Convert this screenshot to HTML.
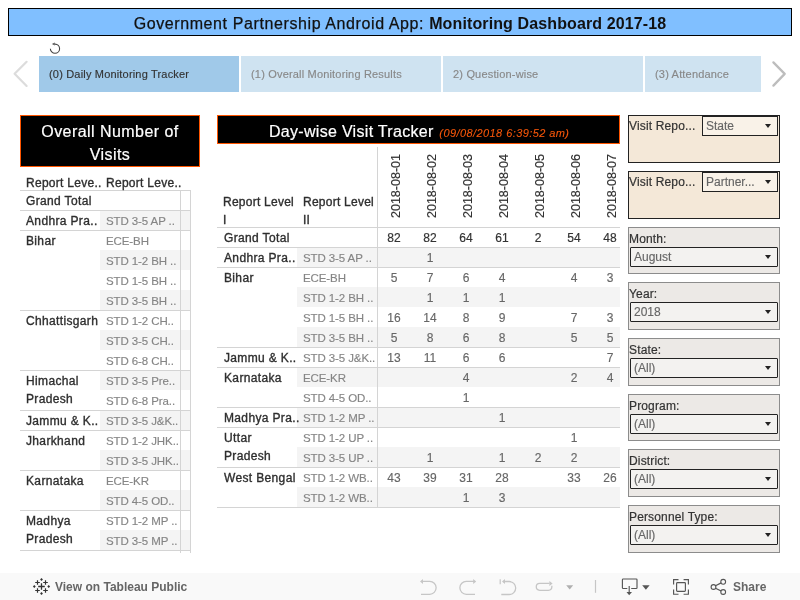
<!DOCTYPE html><html><head><meta charset="utf-8"><style>
*{margin:0;padding:0;box-sizing:border-box}
html,body{width:800px;height:600px;overflow:hidden;background:#fff;font-family:"Liberation Sans", sans-serif}
.a,.t,.hl,.vl,.band,.pbox,.plab,.dd,.ddt,.tri{will-change:transform}
.a{position:absolute}
.t{position:absolute;white-space:nowrap;line-height:20px;height:20px;padding-top:1px}
.l1{color:#2e2e2e;font-size:12px;letter-spacing:0.35px;-webkit-text-stroke:0.35px #2e2e2e}
.l2{color:#858585;font-size:11.5px;letter-spacing:-0.1px;overflow:hidden;width:74px;-webkit-text-stroke:0.15px #858585}
.num{color:#666;font-size:12px;text-align:center;width:36px;-webkit-text-stroke:0.15px #666}
.gt{color:#333;-webkit-text-stroke:0.2px #333}
.hl{position:absolute;height:1px;background:#d4d4d4}
.vl{position:absolute;width:1px;background:#d4d4d4}
.band{position:absolute;height:20px;background:#f4f4f4}
.pbox{position:absolute;left:628px;width:152px;border:1px solid #8c8c8c;background:#ece9e6}
.plab{position:absolute;left:0px;top:3.5px;font-size:12px;letter-spacing:0.15px;color:#333;white-space:nowrap;line-height:14px;-webkit-text-stroke:0.2px #333}
.dd{position:absolute;left:1px;top:19px;width:148px;height:20px;border:1px solid #222;background:#f3f2f0;border-radius:1px}
.ddt{position:absolute;left:3px;top:0;line-height:18px;font-size:12px;color:#666;white-space:nowrap;-webkit-text-stroke:0.15px #666}
.tri{position:absolute;width:0;height:0;border-left:3px solid transparent;border-right:3px solid transparent;border-top:4px solid #222}
</style></head><body>
<div class="band" style="left:100px;top:210px;width:90px"></div>
<div class="band" style="left:100px;top:250px;width:90px"></div>
<div class="band" style="left:100px;top:290px;width:90px"></div>
<div class="band" style="left:100px;top:330px;width:90px"></div>
<div class="band" style="left:100px;top:370px;width:90px"></div>
<div class="band" style="left:100px;top:410px;width:90px"></div>
<div class="band" style="left:100px;top:450px;width:90px"></div>
<div class="band" style="left:100px;top:490px;width:90px"></div>
<div class="band" style="left:100px;top:530px;width:90px"></div>
<div class="band" style="left:297px;top:247px;width:323px"></div>
<div class="band" style="left:297px;top:287px;width:323px"></div>
<div class="band" style="left:297px;top:327px;width:323px"></div>
<div class="band" style="left:297px;top:367px;width:323px"></div>
<div class="band" style="left:297px;top:407px;width:323px"></div>
<div class="band" style="left:297px;top:447px;width:323px"></div>
<div class="band" style="left:297px;top:487px;width:323px"></div>
<div class="hl" style="left:20px;top:190px;width:171px"></div>
<div class="hl" style="left:20px;top:210px;width:171px"></div>
<div class="hl" style="left:20px;top:230px;width:171px"></div>
<div class="hl" style="left:20px;top:310px;width:171px"></div>
<div class="hl" style="left:20px;top:370px;width:171px"></div>
<div class="hl" style="left:20px;top:410px;width:171px"></div>
<div class="hl" style="left:20px;top:430px;width:171px"></div>
<div class="hl" style="left:20px;top:470px;width:171px"></div>
<div class="hl" style="left:20px;top:510px;width:171px"></div>
<div class="hl" style="left:20px;top:550px;width:171px"></div>
<div class="vl" style="left:180px;top:190px;height:363px"></div>
<div class="vl" style="left:190px;top:190px;height:363px"></div>
<div class="hl" style="left:217px;top:227px;width:403px"></div>
<div class="hl" style="left:217px;top:247px;width:403px"></div>
<div class="hl" style="left:217px;top:267px;width:403px"></div>
<div class="hl" style="left:217px;top:347px;width:403px"></div>
<div class="hl" style="left:217px;top:367px;width:403px"></div>
<div class="hl" style="left:217px;top:407px;width:403px"></div>
<div class="hl" style="left:217px;top:427px;width:403px"></div>
<div class="hl" style="left:217px;top:467px;width:403px"></div>
<div class="hl" style="left:217px;top:507px;width:403px"></div>
<div class="vl" style="left:377px;top:147px;height:361px"></div>
<div class="a" style="left:8px;top:8px;width:784px;height:28px;border:1px solid #000;background:#80bfff;"></div>
<div class="a" style="left:8px;top:8px;width:784px;height:28px;line-height:28px;text-align:center;font-size:16px;letter-spacing:0.6px;color:#111;white-space:nowrap;padding-top:2px;-webkit-text-stroke:0.25px #111">Government Partnership Android App: <b style="letter-spacing:0.12px;-webkit-text-stroke:0">Monitoring Dashboard 2017-18</b></div>
<svg class="a" style="left:45px;top:38px" width="20" height="20" viewBox="0 0 20 20"><path d="M10 6.1 A4.6 4.6 0 1 1 5.4 10.7" fill="none" stroke="#444" stroke-width="1.1"/><path d="M6.9 6.1 L9.8 4.6 L9.8 7.6 Z" fill="#555"/></svg>
<div class="a" style="left:39px;top:56px;width:200px;height:36px;background:#a0c9e9;overflow:hidden"><div class="a" style="left:10px;top:0;line-height:36px;font-size:11px;letter-spacing:0.18px;color:#333;white-space:nowrap;-webkit-text-stroke:0.15px #333">(0) Daily Monitoring Tracker</div></div>
<div class="a" style="left:241px;top:56px;width:200px;height:36px;background:#cfe3f1;overflow:hidden"><div class="a" style="left:10px;top:0;line-height:36px;font-size:11px;letter-spacing:0.18px;color:#888;white-space:nowrap;-webkit-text-stroke:0.15px #888">(1) Overall Monitoring Results</div></div>
<div class="a" style="left:443px;top:56px;width:200px;height:36px;background:#cfe3f1;overflow:hidden"><div class="a" style="left:10px;top:0;line-height:36px;font-size:11px;letter-spacing:0.18px;color:#888;white-space:nowrap;-webkit-text-stroke:0.15px #888">2) Question-wise</div></div>
<div class="a" style="left:645px;top:56px;width:116px;height:36px;background:#cfe3f1;overflow:hidden"><div class="a" style="left:10px;top:0;line-height:36px;font-size:11px;letter-spacing:0.18px;color:#888;white-space:nowrap;-webkit-text-stroke:0.15px #888">(3) Attendance</div></div>
<svg class="a" style="left:10px;top:58px" width="24" height="32"><path d="M16.6 3.8 L4.6 15.8 L16.6 27.9" fill="none" stroke="#dcdcdc" stroke-width="2.2" stroke-linecap="round" stroke-linejoin="round"/></svg>
<svg class="a" style="left:766px;top:58px" width="24" height="32"><path d="M7.4 4.4 L18.7 15.9 L7.4 27.6" fill="none" stroke="#bdbdbd" stroke-width="2.3" stroke-linecap="round" stroke-linejoin="round"/></svg>
<div class="a" style="left:20px;top:115px;width:180px;height:52px;background:#000;border:1px solid #ff5500"></div>
<div class="a" style="left:20px;top:120.5px;width:180px;text-align:center;color:#fff;font-size:16px;letter-spacing:0.45px;line-height:22.75px;-webkit-text-stroke:0.2px #fff">Overall Number of<br>Visits</div>
<div class="t l1" style="left:26px;top:172px;letter-spacing:0.28px">Report Leve..</div>
<div class="t l1" style="left:106px;top:172px;letter-spacing:0.28px">Report Leve..</div>
<div class="t l1" style="left:26px;top:190px">Grand Total</div>
<div class="t l2" style="left:106px;top:210px">STD 3-5 AP ..</div>
<div class="t l1" style="left:26px;top:210px">Andhra Pra..</div>
<div class="t l2" style="left:106px;top:230px">ECE-BH</div>
<div class="t l2" style="left:106px;top:250px">STD 1-2 BH ..</div>
<div class="t l2" style="left:106px;top:270px">STD 1-5 BH ..</div>
<div class="t l2" style="left:106px;top:290px">STD 3-5 BH ..</div>
<div class="t l1" style="left:26px;top:230px">Bihar</div>
<div class="t l2" style="left:106px;top:310px">STD 1-2 CH..</div>
<div class="t l2" style="left:106px;top:330px">STD 3-5 CH..</div>
<div class="t l2" style="left:106px;top:350px">STD 6-8 CH..</div>
<div class="t l1" style="left:26px;top:310px">Chhattisgarh</div>
<div class="t l2" style="left:106px;top:370px">STD 3-5 Pre..</div>
<div class="t l2" style="left:106px;top:390px">STD 6-8 Pra..</div>
<div class="a l1" style="left:26px;top:372px;line-height:18px;white-space:nowrap">Himachal<br>Pradesh</div>
<div class="t l2" style="left:106px;top:410px">STD 3-5 J&amp;K..</div>
<div class="t l1" style="left:26px;top:410px">Jammu &amp; K..</div>
<div class="t l2" style="left:106px;top:430px">STD 1-2 JHK..</div>
<div class="t l2" style="left:106px;top:450px">STD 3-5 JHK..</div>
<div class="t l1" style="left:26px;top:430px">Jharkhand</div>
<div class="t l2" style="left:106px;top:470px">ECE-KR</div>
<div class="t l2" style="left:106px;top:490px">STD 4-5 OD..</div>
<div class="t l1" style="left:26px;top:470px">Karnataka</div>
<div class="t l2" style="left:106px;top:510px">STD 1-2 MP ..</div>
<div class="t l2" style="left:106px;top:530px">STD 3-5 MP ..</div>
<div class="a l1" style="left:26px;top:512px;line-height:18px;white-space:nowrap">Madhya<br>Pradesh</div>
<div class="a" style="left:217px;top:115px;width:403px;height:29px;background:#000;border:1px solid #ff5500"></div>
<div class="a" style="left:268.5px;top:118px;line-height:28px;color:#fff;font-size:16px;letter-spacing:0.3px;white-space:nowrap;-webkit-text-stroke:0.2px #fff">Day-wise Visit Tracker <span style="font-size:11px;letter-spacing:0.42px;margin-left:1px;font-style:italic;color:#f5560a;-webkit-text-stroke:0.1px #f5560a">(09/08/2018 6:39:52 am)</span></div>
<div class="a l1" style="left:223px;top:193px;line-height:18px;letter-spacing:0.25px">Report Level<br>I</div>
<div class="a l1" style="left:303px;top:193px;line-height:18px;letter-spacing:0.25px">Report Level<br>II</div>
<div class="a" style="left:362px;top:176px;width:68px;height:20px;line-height:20px;text-align:center;font-size:12.5px;letter-spacing:0;color:#333;white-space:nowrap;transform:rotate(-90deg);-webkit-text-stroke:0.2px #333">2018-08-01</div>
<div class="a" style="left:398px;top:176px;width:68px;height:20px;line-height:20px;text-align:center;font-size:12.5px;letter-spacing:0;color:#333;white-space:nowrap;transform:rotate(-90deg);-webkit-text-stroke:0.2px #333">2018-08-02</div>
<div class="a" style="left:434px;top:176px;width:68px;height:20px;line-height:20px;text-align:center;font-size:12.5px;letter-spacing:0;color:#333;white-space:nowrap;transform:rotate(-90deg);-webkit-text-stroke:0.2px #333">2018-08-03</div>
<div class="a" style="left:470px;top:176px;width:68px;height:20px;line-height:20px;text-align:center;font-size:12.5px;letter-spacing:0;color:#333;white-space:nowrap;transform:rotate(-90deg);-webkit-text-stroke:0.2px #333">2018-08-04</div>
<div class="a" style="left:506px;top:176px;width:68px;height:20px;line-height:20px;text-align:center;font-size:12.5px;letter-spacing:0;color:#333;white-space:nowrap;transform:rotate(-90deg);-webkit-text-stroke:0.2px #333">2018-08-05</div>
<div class="a" style="left:542px;top:176px;width:68px;height:20px;line-height:20px;text-align:center;font-size:12.5px;letter-spacing:0;color:#333;white-space:nowrap;transform:rotate(-90deg);-webkit-text-stroke:0.2px #333">2018-08-06</div>
<div class="a" style="left:578px;top:176px;width:68px;height:20px;line-height:20px;text-align:center;font-size:12.5px;letter-spacing:0;color:#333;white-space:nowrap;transform:rotate(-90deg);-webkit-text-stroke:0.2px #333">2018-08-07</div>
<div class="t num gt" style="left:376px;top:227px">82</div>
<div class="t num gt" style="left:412px;top:227px">82</div>
<div class="t num gt" style="left:448px;top:227px">64</div>
<div class="t num gt" style="left:484px;top:227px">61</div>
<div class="t num gt" style="left:520px;top:227px">2</div>
<div class="t num gt" style="left:556px;top:227px">54</div>
<div class="t num gt" style="left:592px;top:227px">48</div>
<div class="t l1" style="left:223.5px;top:227px">Grand Total</div>
<div class="t l2" style="left:302.5px;top:247px">STD 3-5 AP ..</div>
<div class="t num" style="left:412px;top:247px">1</div>
<div class="t l1" style="left:223.5px;top:247px">Andhra Pra..</div>
<div class="t l2" style="left:302.5px;top:267px">ECE-BH</div>
<div class="t num" style="left:376px;top:267px">5</div>
<div class="t num" style="left:412px;top:267px">7</div>
<div class="t num" style="left:448px;top:267px">6</div>
<div class="t num" style="left:484px;top:267px">4</div>
<div class="t num" style="left:556px;top:267px">4</div>
<div class="t num" style="left:592px;top:267px">3</div>
<div class="t l2" style="left:302.5px;top:287px">STD 1-2 BH ..</div>
<div class="t num" style="left:412px;top:287px">1</div>
<div class="t num" style="left:448px;top:287px">1</div>
<div class="t num" style="left:484px;top:287px">1</div>
<div class="t l2" style="left:302.5px;top:307px">STD 1-5 BH ..</div>
<div class="t num" style="left:376px;top:307px">16</div>
<div class="t num" style="left:412px;top:307px">14</div>
<div class="t num" style="left:448px;top:307px">8</div>
<div class="t num" style="left:484px;top:307px">9</div>
<div class="t num" style="left:556px;top:307px">7</div>
<div class="t num" style="left:592px;top:307px">3</div>
<div class="t l2" style="left:302.5px;top:327px">STD 3-5 BH ..</div>
<div class="t num" style="left:376px;top:327px">5</div>
<div class="t num" style="left:412px;top:327px">8</div>
<div class="t num" style="left:448px;top:327px">6</div>
<div class="t num" style="left:484px;top:327px">8</div>
<div class="t num" style="left:556px;top:327px">5</div>
<div class="t num" style="left:592px;top:327px">5</div>
<div class="t l1" style="left:223.5px;top:267px">Bihar</div>
<div class="t l2" style="left:302.5px;top:347px">STD 3-5 J&amp;K..</div>
<div class="t num" style="left:376px;top:347px">13</div>
<div class="t num" style="left:412px;top:347px">11</div>
<div class="t num" style="left:448px;top:347px">6</div>
<div class="t num" style="left:484px;top:347px">6</div>
<div class="t num" style="left:592px;top:347px">7</div>
<div class="t l1" style="left:223.5px;top:347px">Jammu &amp; K..</div>
<div class="t l2" style="left:302.5px;top:367px">ECE-KR</div>
<div class="t num" style="left:448px;top:367px">4</div>
<div class="t num" style="left:556px;top:367px">2</div>
<div class="t num" style="left:592px;top:367px">4</div>
<div class="t l2" style="left:302.5px;top:387px">STD 4-5 OD..</div>
<div class="t num" style="left:448px;top:387px">1</div>
<div class="t l1" style="left:223.5px;top:367px">Karnataka</div>
<div class="t l2" style="left:302.5px;top:407px">STD 1-2 MP ..</div>
<div class="t num" style="left:484px;top:407px">1</div>
<div class="t l1" style="left:223.5px;top:407px">Madhya Pra..</div>
<div class="t l2" style="left:302.5px;top:427px">STD 1-2 UP ..</div>
<div class="t num" style="left:556px;top:427px">1</div>
<div class="t l2" style="left:302.5px;top:447px">STD 3-5 UP ..</div>
<div class="t num" style="left:412px;top:447px">1</div>
<div class="t num" style="left:484px;top:447px">1</div>
<div class="t num" style="left:520px;top:447px">2</div>
<div class="t num" style="left:556px;top:447px">2</div>
<div class="a l1" style="left:223.5px;top:429px;line-height:18px;white-space:nowrap">Uttar<br>Pradesh</div>
<div class="t l2" style="left:302.5px;top:467px">STD 1-2 WB..</div>
<div class="t num" style="left:376px;top:467px">43</div>
<div class="t num" style="left:412px;top:467px">39</div>
<div class="t num" style="left:448px;top:467px">31</div>
<div class="t num" style="left:484px;top:467px">28</div>
<div class="t num" style="left:556px;top:467px">33</div>
<div class="t num" style="left:592px;top:467px">26</div>
<div class="t l2" style="left:302.5px;top:487px">STD 1-2 WB..</div>
<div class="t num" style="left:448px;top:487px">1</div>
<div class="t num" style="left:484px;top:487px">3</div>
<div class="t l1" style="left:223.5px;top:467px">West Bengal</div>
<div class="a" style="left:628px;top:115px;width:152px;height:48px;border:1px solid #222;background:#f4e8d8"><div class="plab" style="top:3px;font-size:12px;letter-spacing:0.15px">Visit Repo...</div><div class="a" style="left:73px;top:0px;width:76px;height:20px;border:1px solid #222;background:#f9f2e8"><div class="ddt" style="left:3px;line-height:18px">State</div><div class="tri" style="left:62px;top:7px"></div></div></div>
<div class="a" style="left:628px;top:171px;width:152px;height:48px;border:1px solid #222;background:#f4e8d8"><div class="plab" style="top:3px;font-size:12px;letter-spacing:0.15px">Visit Repo...</div><div class="a" style="left:73px;top:0px;width:76px;height:20px;border:1px solid #222;background:#f9f2e8"><div class="ddt" style="left:3px;line-height:18px">Partner...</div><div class="tri" style="left:62px;top:7px"></div></div></div>
<div class="pbox" style="top:227px;height:47px"><div class="plab">Month:</div><div class="dd"><div class="ddt">August</div><div class="tri" style="left:134px;top:7px"></div></div></div>
<div class="pbox" style="top:282px;height:48px"><div class="plab">Year:</div><div class="dd"><div class="ddt">2018</div><div class="tri" style="left:134px;top:7px"></div></div></div>
<div class="pbox" style="top:338px;height:48px"><div class="plab">State:</div><div class="dd"><div class="ddt">(All)</div><div class="tri" style="left:134px;top:7px"></div></div></div>
<div class="pbox" style="top:394px;height:47px"><div class="plab">Program:</div><div class="dd"><div class="ddt">(All)</div><div class="tri" style="left:134px;top:7px"></div></div></div>
<div class="pbox" style="top:449px;height:48px"><div class="plab">District:</div><div class="dd"><div class="ddt">(All)</div><div class="tri" style="left:134px;top:7px"></div></div></div>
<div class="pbox" style="top:505px;height:48px"><div class="plab">Personnel Type:</div><div class="dd"><div class="ddt">(All)</div><div class="tri" style="left:134px;top:7px"></div></div></div>
<div class="a" style="left:0;top:573px;width:800px;height:27px;background:#f9f9f9"></div>
<svg class="a" style="left:0;top:573px" width="800" height="27" viewBox="0 573 800 27"><path d="M38.2 586.5H44.8M41.5 583.2V589.8" stroke="#333" stroke-width="1.3" fill="none"/><path d="M35.2 582.5H39.8M37.5 580.2V584.8" stroke="#333" stroke-width="1.2" fill="none"/><path d="M35.2 590.5H39.8M37.5 588.2V592.8" stroke="#333" stroke-width="1.2" fill="none"/><path d="M43.2 582.5H47.8M45.5 580.2V584.8" stroke="#333" stroke-width="1.2" fill="none"/><path d="M43.2 590.5H47.8M45.5 588.2V592.8" stroke="#333" stroke-width="1.2" fill="none"/><path d="M40.1 579.5L41.5 578.1L42.9 579.5L41.5 580.9Z" fill="#333"/><path d="M40.1 593.5L41.5 592.1L42.9 593.5L41.5 594.9Z" fill="#333"/><path d="M32.9 586.5L34.3 585.1L35.699999999999996 586.5L34.3 587.9Z" fill="#333"/><path d="M47.300000000000004 586.5L48.7 585.1L50.1 586.5L48.7 587.9Z" fill="#333"/><path d="M421 581.4H429.7A6.45 6.45 0 0 1 429.7 594.3H421" stroke="#c6c6c6" stroke-width="1.3" fill="none"/><path d="M420 581.4L423 578.9V583.9Z" fill="#c6c6c6"/><path d="M475 581.4H466.3A6.45 6.45 0 0 0 466.3 594.3H475" stroke="#c6c6c6" stroke-width="1.3" fill="none"/><path d="M476.2 581.4L473.2 578.9V583.9Z" fill="#c6c6c6"/><path d="M503 581.5H509.2A6.5 6.5 0 0 1 509.2 594.5H501.3" stroke="#c6c6c6" stroke-width="1.3" fill="none"/><path d="M502 581.5L505 579V584Z" fill="#c6c6c6"/><path d="M500.2 579.2V584.2" stroke="#c6c6c6" stroke-width="1.2"/><path d="M549.5 583.4H539.7A3.45 3.45 0 0 0 539.7 590.3H548.4A3.45 3.45 0 0 0 551.85 586.85V585.8" stroke="#c6c6c6" stroke-width="1.3" fill="none"/><path d="M552.6 583.4L549.4 580.9V585.9Z" fill="#c6c6c6"/><path d="M566.2 585.3H573.2L569.7 589.6Z" fill="#b0b0b0"/><path d="M595.5 580V592.8" stroke="#c6c6c6" stroke-width="1.2"/><path d="M627.3 588.5H623.2A0.8 0.8 0 0 1 622.4 587.7V579.8A0.8 0.8 0 0 1 623.2 579H636.2A0.8 0.8 0 0 1 637 579.8V587.7A0.8 0.8 0 0 1 636.2 588.5H631.2M629.2 586V592.5" stroke="#555" stroke-width="1.15" fill="none"/><path d="M626.5 592L632 592L629.2 595.3Z" fill="#555"/><path d="M642.2 585.2H649.6L645.9 589.8Z" fill="#555"/><path d="M673.6 584.5V579.6H678.5M683.6 579.6H688.4V584.5M688.4 589.4V594.2H683.6M678.5 594.2H673.6V589.4" stroke="#555" stroke-width="1.15" fill="none"/><rect x="676.6" y="582.6" width="8.8" height="8.8" rx="0.8" stroke="#555" stroke-width="1.15" fill="none"/><path d="M715.5 585.8L721.2 582.9M715.5 588.2L721.2 591" stroke="#555" stroke-width="1.2" fill="none"/><circle cx="713.5" cy="587" r="2.4" stroke="#555" stroke-width="1.1" fill="none"/><circle cx="723.2" cy="581.8" r="2.4" stroke="#555" stroke-width="1.1" fill="none"/><circle cx="723.2" cy="592" r="2.4" stroke="#555" stroke-width="1.1" fill="none"/></svg>
<div class="a" style="left:55px;top:574px;line-height:27px;font-size:12px;font-weight:bold;color:#666;white-space:nowrap">View on Tableau Public</div>
<div class="a" style="left:733px;top:574px;line-height:27px;font-size:12px;font-weight:bold;color:#666;white-space:nowrap">Share</div>
</body></html>
